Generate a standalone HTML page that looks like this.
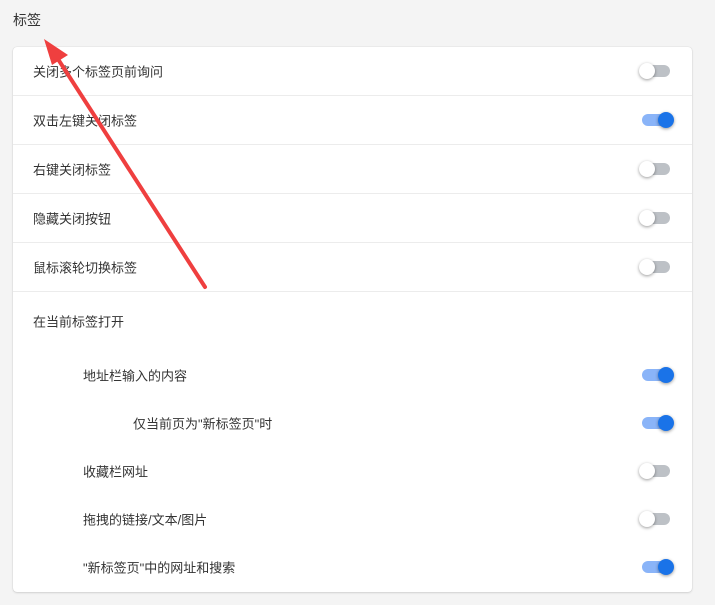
<!DOCTYPE html>
<html><head><meta charset="utf-8"><style>
body{margin:0;width:715px;height:605px;background:#f4f4f4;font-family:"Liberation Sans","Noto Sans CJK SC",sans-serif;font-size:13px;color:#333;position:relative;overflow:hidden}
.title{position:absolute;left:13px;top:10px;font-size:14px;color:#333}
.card{position:absolute;left:13px;top:47px;width:679px;height:545px;background:#fff;border-radius:4px;box-shadow:0 0 1px rgba(0,0,0,.2),0 1px 2px rgba(0,0,0,.12)}
.row{position:absolute;left:0;right:0;height:48px;border-bottom:1px solid #ececec}
.t{position:absolute;top:50%;transform:translateY(-50%);white-space:nowrap}
.tg{position:absolute;right:22px;top:50%;width:28px;height:12px;margin-top:-6px;border-radius:6px;background:#bdc1c6}
.tg::after{content:"";position:absolute;top:-2px;left:-3px;width:16px;height:16px;border-radius:50%;background:#fff;box-shadow:0 1px 3px rgba(0,0,0,.4)}
.tg.on{background:#8ab4f8}
.tg.on::after{left:16px;background:#1a73e8}
</style></head><body>
<div class="title">标签</div>
<div class="card">
<div class="row" style="top:0"><span class="t" style="left:20px">关闭多个标签页前询问</span><span class="tg"></span></div>
<div class="row" style="top:49px"><span class="t" style="left:20px">双击左键关闭标签</span><span class="tg on"></span></div>
<div class="row" style="top:98px"><span class="t" style="left:20px">右键关闭标签</span><span class="tg"></span></div>
<div class="row" style="top:147px"><span class="t" style="left:20px">隐藏关闭按钮</span><span class="tg"></span></div>
<div class="row" style="top:196px"><span class="t" style="left:20px">鼠标滚轮切换标签</span><span class="tg"></span></div>
<div class="row" style="top:250px;border:0"><span class="t" style="left:20px">在当前标签打开</span></div>
<div class="row" style="top:304px;border:0"><span class="t" style="left:70px">地址栏输入的内容</span><span class="tg on"></span></div>
<div class="row" style="top:352px;border:0"><span class="t" style="left:120px">仅当前页为"新标签页"时</span><span class="tg on"></span></div>
<div class="row" style="top:400px;border:0"><span class="t" style="left:70px">收藏栏网址</span><span class="tg"></span></div>
<div class="row" style="top:448px;border:0"><span class="t" style="left:70px">拖拽的链接/文本/图片</span><span class="tg"></span></div>
<div class="row" style="top:496px;border:0"><span class="t" style="left:70px">"新标签页"中的网址和搜索</span><span class="tg on"></span></div>
</div>
<svg style="position:absolute;left:0;top:0" width="715" height="605">
<line x1="205" y1="287" x2="56" y2="56" stroke="#ef3f3f" stroke-width="4" stroke-linecap="round"/>
<polygon points="44,39 68,55 52,65" fill="#ef3f3f"/>
</svg>
</body></html>
